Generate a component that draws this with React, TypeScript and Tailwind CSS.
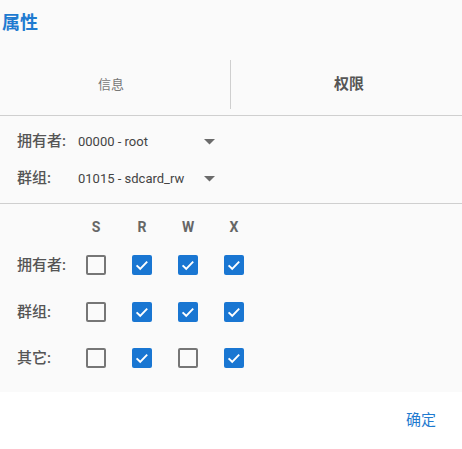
import React from "react";

const font = { fontFamily: 'Roboto, "Noto Sans CJK SC", sans-serif' };

function Box({ checked }: { checked: boolean }) {
  if (checked) {
    return (
      <div className="w-[20px] h-[20px] rounded-[2px] bg-[#1976d2] flex items-center justify-center">
        <svg width="20" height="20" viewBox="0 0 20 20">
          <path d="M4.6 10.4 L8.2 13.8 L15.2 6.6" fill="none" stroke="#fff" strokeWidth="1.9" />
        </svg>
      </div>
    );
  }
  return <div className="w-[20px] h-[20px] rounded-[2px] border-[2.5px] border-[#767676]" />;
}

function Tri() {
  return (
    <svg width="11" height="6" viewBox="0 0 11 6">
      <path d="M0 0 L11 0 L5.5 5.5 Z" fill="#6b6b6b" />
    </svg>
  );
}

const rows: [string, boolean[]][] = [
  ["拥有者:", [false, true, true, true]],
  ["群组:", [false, true, true, true]],
  ["其它:", [false, true, false, true]],
];

export default function App() {
  return (
    <div className="w-[462px] h-[449px] flex flex-col bg-white" style={font}>
      <div className="bg-[#fafafa] h-[392px] flex flex-col">
        <div className="h-[60px] pt-[11px] pl-[2px]">
          <div className="text-[18px] leading-[24px] font-bold text-[#1f7bd0]">属性</div>
        </div>
        <div className="h-[56px] flex border-b border-[#cfcfcf]">
          <div className="w-[230px] flex items-center justify-center pb-[6px] pr-[8px] text-[13px] text-[#777]">信息</div>
          <div className="w-px h-[49px] bg-[#cfcfcf]" />
          <div className="flex-1 flex items-center justify-center pb-[6px] pl-[5px] text-[15px] font-bold text-[#555]">权限</div>
        </div>
        <div className="pt-[7px] pb-[6px] border-b border-[#cfcfcf]">
          {[
            ["拥有者:", "00000 - root"],
            ["群组:", "01015 - sdcard_rw"],
          ].map(([l, v]) => (
            <div key={l} className="h-[37px] flex items-center pl-[17px]">
              <div className="w-[61px] text-[15px] font-medium text-[#555]">{l}</div>
              <div className="w-[126px] text-[13px] text-[#444]">{v}</div>
              <Tri />
            </div>
          ))}
        </div>
        <div className="pl-[17px] grid grid-cols-[56px_46px_46px_46px_46px]">
          <div className="h-[38px]" />
          {["S", "R", "W", "X"].map((h) => (
            <div key={h} className="h-[38px] pt-[15px] text-center text-[14px] leading-[16px] font-bold text-[#666]">{h}</div>
          ))}
          {rows.map(([l, cs]) => (
            <React.Fragment key={l}>
              <div className="h-[46.5px] flex items-center text-[15px] font-medium text-[#555] whitespace-nowrap">{l}</div>
              {cs.map((c, i) => (
                <div key={i} className="h-[46.5px] flex items-center justify-center">
                  <Box checked={c} />
                </div>
              ))}
            </React.Fragment>
          ))}
        </div>
      </div>
      <div className="flex-1 flex items-center justify-end pr-[26px] pb-[1px]">
        <div className="text-[15px] text-[#1f7bd0]">确定</div>
      </div>
    </div>
  );
}
